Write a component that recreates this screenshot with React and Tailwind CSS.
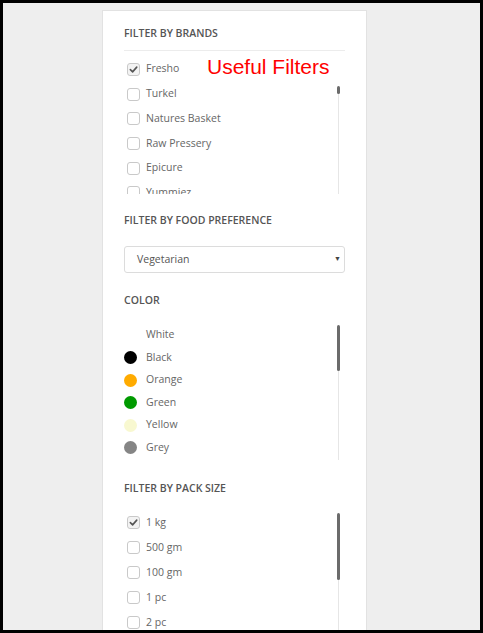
import React from 'react';

const BRANDS = [
  { name: 'Fresho', checked: true },
  { name: 'Turkel' },
  { name: 'Natures Basket' },
  { name: 'Raw Pressery' },
  { name: 'Epicure' },
  { name: 'Yummiez' },
];

const COLORS = [
  { name: 'White', dot: 'bg-white' },
  { name: 'Black', dot: 'bg-black' },
  { name: 'Orange', dot: 'bg-[#ffab00]' },
  { name: 'Green', dot: 'bg-[#009a00]' },
  { name: 'Yellow', dot: 'bg-[#f8f8d0]' },
  { name: 'Grey', dot: 'bg-[#858585]' },
];

const SIZES = [
  { name: '1 kg', checked: true },
  { name: '500 gm' },
  { name: '100 gm' },
  { name: '1 pc' },
  { name: '2 pc' },
];

const font = { fontFamily: '"Open Sans", "Noto Sans", sans-serif' };

const Heading = ({ children, className = '' }) => (
  <h3 className={`h-4 leading-4 text-[10.5px] font-semibold text-[#555] uppercase ${className}`}>{children}</h3>
);

const Checkbox = ({ checked }) => (
  <span className={`w-[13px] h-[13px] rounded-[3px] border border-[#c9c9c9] flex items-center justify-center shrink-0 ${checked ? 'bg-[#f3f3f3]' : 'bg-white'}`}>
    {checked && (
      <svg width="9" height="9" viewBox="0 0 10 10">
        <path d="M1.5 5.2 L4 7.6 L8.6 2.4" fill="none" stroke="#555" strokeWidth="1.8" strokeLinecap="round" strokeLinejoin="round" />
      </svg>
    )}
  </span>
);

// thin custom scrollbar drawn over the right edge of a list
const Scrollbar = ({ top, thumbTop, thumbHeight }) => (
  <div className="absolute right-[5px] bottom-0 w-[3px]" style={{ top }}>
    <div className="absolute left-[1px] top-0 bottom-0 w-px bg-[#e6e6e6]" />
    <div className="absolute left-0 w-[3px] rounded-sm bg-[#6b6b6b]" style={{ top: thumbTop, height: thumbHeight }} />
  </div>
);

const App = () => {
  return (
    <div className="w-[483px] h-[633px] border-[3px] border-black bg-[#eeeeee] overflow-hidden" style={font}>
      <div className="relative mt-[7px] ml-[99px] w-[265px] h-[623px] bg-white border border-[#e2e2e2] border-b-0 px-[21px] pt-[14px] overflow-hidden">
        {/* annotation */}
        <span
          className="absolute left-[104px] top-[45px] text-[21px] leading-none text-[#f00] whitespace-nowrap"
          style={{ fontFamily: '"Liberation Sans", Arial, sans-serif' }}
        >
          Useful Filters
        </span>

        {/* Brands */}
        <div className="pb-[9px] border-b border-[#ececec]">
          <Heading>Filter by Brands</Heading>
        </div>
        <div className="relative h-[143px] overflow-hidden pt-[6px]">
          {BRANDS.map(b => (
            <div key={b.name} className="h-[24.7px] flex items-center pl-[3px] gap-[6px] text-[10.5px] text-[#666]">
              <Checkbox checked={b.checked} />
              <span>{b.name}</span>
            </div>
          ))}
          <Scrollbar top={35} thumbTop={0} thumbHeight={8} />
        </div>

        {/* Food preference */}
        <Heading className="mt-[18px]">Filter by Food Preference</Heading>
        <div className="mt-[18px] h-[27px] rounded-[3px] border border-[#dcdcdc] flex items-center justify-between pl-[12px] pr-[3px] text-[10.5px] text-[#555]">
          <span>Vegetarian</span>
          <span className="text-[7px] text-[#444]">▼</span>
        </div>

        {/* Color */}
        <Heading className="mt-[19px]">Color</Heading>
        <div className="relative mt-[16px] h-[136px] overflow-hidden">
          {COLORS.map(c => (
            <div key={c.name} className="h-[22.5px] flex items-center gap-[9px] text-[10.5px] text-[#666]">
              <span className={`w-[13px] h-[13px] rounded-full shrink-0 ${c.dot}`} />
              <span>{c.name}</span>
            </div>
          ))}
          <Scrollbar top={1} thumbTop={0} thumbHeight={46} />
        </div>

        {/* Pack size */}
        <Heading className="mt-[20px]">Filter by Pack Size</Heading>
        <div className="relative mt-[14px] h-[130px] overflow-hidden">
          {SIZES.map(s => (
            <div key={s.name} className="h-[25px] flex items-center pl-[3px] gap-[6px] text-[10.5px] text-[#666]">
              <Checkbox checked={s.checked} />
              <span>{s.name}</span>
            </div>
          ))}
          <Scrollbar top={3} thumbTop={0} thumbHeight={67} />
        </div>
      </div>
    </div>
  );
};

export default App;
